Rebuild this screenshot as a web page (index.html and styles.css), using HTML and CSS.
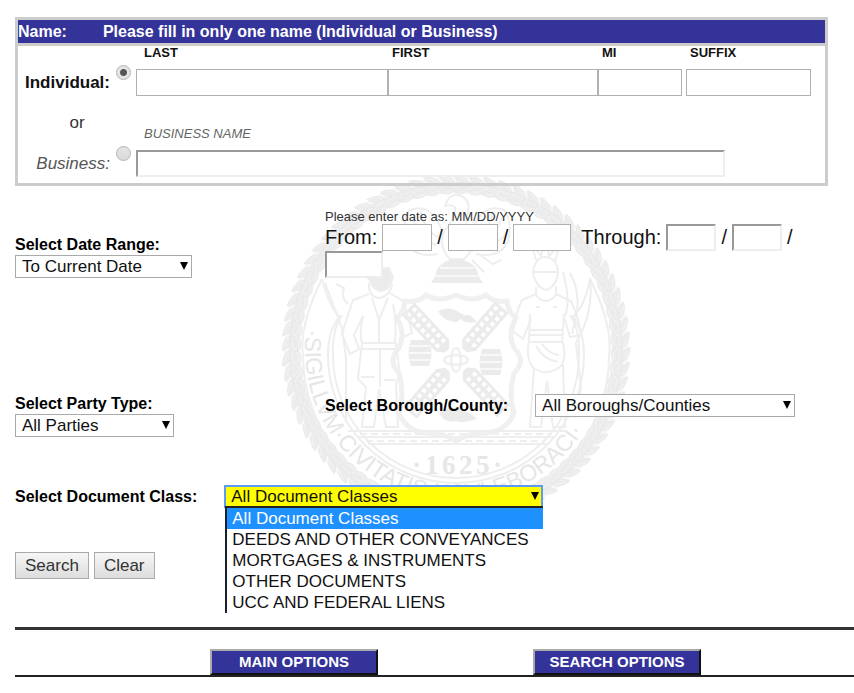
FILE: index.html
```html
<!DOCTYPE html>
<html lang="en">
<head>
  <meta charset="UTF-8">
  <meta name="viewport" content="width=device-width, initial-scale=1.0">
  <title>Search By Party Name</title>
  <link rel="stylesheet" href="styles.css">
</head>
<body>

  <!-- City seal watermark -->
  <svg class="seal" viewBox="0 0 350 350" aria-hidden="true">
    <defs>
      <g id="leaf">
        <path d="M172 0 q11 0 15 8 q-10 3 -15 -8z M171 8 q10 -3 17 3 q-9 7 -17 -3z M171 16 q9 -7 16 -3 q-5 10 -16 3z"/>
        <path d="M174 2 l9 5 M173 9 h11 M173 16 l10 -2"/>
      </g>
      <g id="leaf2"><use href="#leaf"/><use href="#leaf" transform="rotate(5 174 174)"/></g>
      <g id="leaf4"><use href="#leaf2"/><use href="#leaf2" transform="rotate(10 174 174)"/></g>
      <g id="leaf12"><use href="#leaf4"/><use href="#leaf4" transform="rotate(20 174 174)"/><use href="#leaf4" transform="rotate(40 174 174)"/></g>
      <g id="sail">
        <path class="fill" d="M-9 -70 h18 v50 l-6 7 h-6 l-6 -7z"/>
        <path class="holes" d="M-4 -67 v46 M4 -67 v46"/>
      </g>
      <g id="barrel">
        <path class="fill" d="M-9 -13 h18 q5 13 0 26 h-18 q-5 -13 0 -26z"/>
        <path class="gap" d="M-11 -7 h22 M-12 0 h24 M-11 7 h22"/>
      </g>
      <path id="motto" d="M25 150 A151 151 0 1 0 323 150"/>
    </defs>

    <circle class="wreath-base" cx="174" cy="174" r="164"/>
    <g class="wreath">
      <use href="#leaf12"/>
      <use href="#leaf12" transform="rotate(60 174 174)"/>
      <use href="#leaf12" transform="rotate(120 174 174)"/>
      <use href="#leaf12" transform="rotate(180 174 174)"/>
      <use href="#leaf12" transform="rotate(240 174 174)"/>
      <use href="#leaf12" transform="rotate(300 174 174)"/>
    </g>

    <!-- ribbon -->
    <g class="line">
      <path d="M40 104 Q17 150 21 181 A153 153 0 0 0 327 181 Q331 150 308 104"/>
      <path d="M40 104 Q48 134 58 142 Q46 154 46 180 A128 128 0 0 0 302 180 Q302 154 290 142 Q302 134 308 104"/>
      <path d="M60 140 Q50 154 51 180 A123 123 0 0 0 297 180 Q298 154 288 140"/>
    </g>
    <text class="motto"><textPath href="#motto" startOffset="4">·SIGILLVM·CIVITATIS·NOVI·EBORACI·</textPath></text>
    <text class="year" x="130 143 160 177 194 211" y="299">·1625·</text>

    <!-- eagle on the half globe -->
    <path class="fill" d="M149 108 l4 -6 q3 -17 21 -18 q20 1 23 18 l4 6z"/>
    <path class="gap" d="M154 101 h42 M158 93 h34"/>
    <g class="line">
      <path d="M163 31 q4 -14 16 -10 q11 5 6 19 q-3 12 6 18 q3 16 -9 26 h-14 q-12 -12 -6 -28 q12 -12 11 -24 q-5 -3 -10 -1z"/>
      <path d="M160 56 Q150 27 128 35 Q119 46 124 66 Q132 84 156 79 M130 42 q7 20 24 28 M139 36 q2 18 18 27 M124 56 q10 14 26 18"/>
      <path d="M190 56 Q200 27 222 35 Q231 46 226 66 Q218 84 194 79 M220 42 q-7 20 -24 28 M211 36 q-2 18 -18 27 M226 56 q-10 14 -26 18"/>
      <path d="M190 85 l12 12 M198 80 l13 9 l8 -4"/>
    </g>

    <!-- shield -->
    <path class="band" d="M115 143 q7 -6 8 -17 q14 2 21 -6 q13 8 30 0 q17 8 30 0 q8 8 21 6 q1 11 9 17 q-9 15 -2 30 q13 13 0 25 q-6 22 0 40 q-7 18 -28 20 q-18 0 -30 8 q-12 -8 -30 -8 q-20 -2 -27 -20 q6 -18 0 -40 q-12 -12 0 -25 q7 -15 -2 -30z"/>
    <use href="#sail" transform="translate(174 185) rotate(-43)"/>
    <use href="#sail" transform="translate(174 185) rotate(41)"/>
    <use href="#sail" transform="translate(174 185) rotate(137)"/>
    <use href="#sail" transform="translate(174 185) rotate(221)"/>
    <g class="line">
      <circle cx="174" cy="185" r="5"/>
      <ellipse cx="174" cy="185" rx="12" ry="5"/>
      <ellipse cx="174" cy="185" rx="5" ry="12"/>
    </g>
    <use href="#barrel" transform="translate(138 178)"/>
    <use href="#barrel" transform="translate(209 187)"/>
    <path class="fill" d="M156 136 q10 -5 19 0 q6 5 13 4 l7 7 q-12 2 -16 -3 q-5 5 -10 2 q-8 -1 -13 -10z"/>
    <path class="fill" d="M157 238 q12 -10 26 -2 q6 2 12 8 q-16 5 -21 2 q-11 3 -17 -8z"/>

    <!-- sailor -->
    <g class="line">
      <path class="fill" d="M83 101 l8 -8 h16 l4 9 q-3 13 -12 14 q-9 -1 -12 -12z"/>
      <path d="M87 108 q-1 13 9 15 q12 -1 14 -14 M87 119 l-16 6 q-6 17 -11 34 l8 20 l9 -5 l-5 -14 l9 -19 M108 118 l13 8 q6 17 9 32 l-13 6"/>
      <path d="M81 141 q-4 18 -1 27 h33 q2 -20 -2 -39 M90 123 l7 22 l9 -22 M97 145 v22 M80 168 l-4 36 l8 8 l-4 40 h12 l5 -38 l7 38 h12 l-2 -43 l4 -8 l-4 -33 M80 174 h33 M98 174 v38 M79 202 h14 M102 205 h12"/>
      <path d="M43 108 l17 45 l4 30 v64 M66 129 q-8 -7 -4 -16 l-8 -4"/>
    </g>

    <!-- native american -->
    <g class="line">
      <path d="M251 98 q2 -16 12 -16 q13 1 13 17 q-3 14 -12 16 q-10 -2 -13 -17z M252 97 h23 M254 85 l-5 -18 l10 14 l5 -20 l3 20 l11 -12 l-5 18"/>
      <path d="M254 112 v8 q9 12 20 0 v-9 M254 119 l-14 6 q-7 15 -9 31 l10 8 l8 -20 M274 119 l15 7 q8 17 10 34 l-11 2 l-6 -20"/>
      <path d="M248 139 l-1 28 h33 l2 -28 M254 132 h4 M271 132 h4 M248 155 h32 M248 160 h32 M247 166 q-4 20 6 28 q14 8 27 -4 q5 -12 0 -24 M252 193 l-4 59 h11 l6 -46 l6 46 h12 l-2 -62 M254 171 q8 14 22 16 M260 169 q7 10 17 11"/>
      <path d="M288 98 q10 17 7 39 l-5 22 M308 103 q4 34 -14 65 l5 45 l-6 30 M281 97 q8 30 2 44"/>
    </g>

    <!-- ground -->
    <g class="line">
      <path d="M66 256 H284 M75 262 H274 M86 269 h178"/>
      <path stroke-dasharray="7 4" d="M78 259 H270 M84 266 H264"/>
    </g>
  </svg>

  <form class="page" onsubmit="return false">

    <section class="name-box">
      <h2 class="name-title"><span>Name:</span><span>Please fill in only one name (Individual or Business)</span></h2>

      <div class="name-row">
        <label class="kind" for="individual">Individual:</label>
        <input class="radio" type="radio" id="individual" name="kind" checked>
        <div class="fields">
          <div class="field last">
            <label for="last">LAST</label>
            <input type="text" id="last">
          </div>
          <div class="field first">
            <label for="first">FIRST</label>
            <input type="text" id="first">
          </div>
          <div class="field mi">
            <label for="mi">MI</label>
            <input type="text" id="mi">
          </div>
          <div class="field suffix">
            <label for="suffix">SUFFIX</label>
            <input type="text" id="suffix">
          </div>
        </div>
      </div>

      <div class="name-row business">
        <div class="or">or</div>
        <label class="kind" for="business">Business:</label>
        <input class="radio" type="radio" id="business" name="kind">
        <div class="field business-field">
          <label for="business_name">BUSINESS NAME</label>
          <input class="inset" type="text" id="business_name">
        </div>
      </div>
    </section>

    <section class="row dates">
      <div class="stack">
        <label for="range">Select Date Range:</label>
        <span class="select range"><select id="range"><option>To Current Date</option></select></span>
      </div>
      <div class="date-entry">
        <div class="hint">Please enter date as: MM/DD/YYYY</div>
        <div class="date-line">
          <span>From:</span>
          <input type="text" aria-label="From month">
          <span>/</span>
          <input type="text" aria-label="From day">
          <span>/</span>
          <input class="year-input" type="text" aria-label="From year">
          <span class="through">Through:</span>
          <input class="inset" type="text" aria-label="Through month">
          <span>/</span>
          <input class="inset" type="text" aria-label="Through day">
          <span>/</span>
          <input class="inset year-input" type="text" aria-label="Through year">
        </div>
      </div>
    </section>

    <section class="row party">
      <div class="stack">
        <label for="party">Select Party Type:</label>
        <span class="select party-type"><select id="party"><option>All Parties</option></select></span>
      </div>
      <div class="inline">
        <label for="borough">Select Borough/County:</label>
        <span class="select borough"><select id="borough"><option>All Boroughs/Counties</option></select></span>
      </div>
    </section>

    <section class="doc-class">
      <label for="doc">Select Document Class:</label>
      <div class="select doc">
        <select id="doc"><option>All Document Classes</option></select>
        <ul class="menu" role="listbox" aria-label="Document classes">
          <li class="active" role="option" aria-selected="true">All Document Classes</li>
          <li role="option">DEEDS AND OTHER CONVEYANCES</li>
          <li role="option">MORTGAGES &amp; INSTRUMENTS</li>
          <li role="option">OTHER DOCUMENTS</li>
          <li role="option">UCC AND FEDERAL LIENS</li>
        </ul>
      </div>
    </section>

    <div class="buttons">
      <button type="submit" class="btn">Search</button>
      <button type="reset" class="btn">Clear</button>
    </div>

    <nav class="options">
      <button type="button" class="nav-btn">MAIN OPTIONS</button>
      <button type="button" class="nav-btn">SEARCH OPTIONS</button>
    </nav>
  </form>

</body>
</html>
```
FILE: styles.css
```css
* {
  box-sizing: border-box;
}

body {
  margin: 0;
  position: relative;
  background: #fff;
  color: #111;
  font-family: "Liberation Sans", Arial, sans-serif;
  font-size: 17px;
  line-height: 20px;
}

input,
select,
button {
  font: inherit;
  color: inherit;
  margin: 0;
}

.page {
  padding: 17px 0 16px 15px;
}

/* watermark */
.seal {
  position: absolute;
  left: 282px;
  top: 175px;
  width: 350px;
  z-index: -1;
  fill: none;
  stroke: none;
}

.seal .wreath-base {
  stroke: #f7f7f7;
  stroke-width: 17;
}

.seal .wreath {
  fill: #f0f0f0;
  stroke: #e9e9e9;
  stroke-width: 1;
}

.seal .line {
  stroke: #eeeeee;
  stroke-width: 2;
}

.seal .band {
  stroke: #f0f0f0;
  stroke-width: 5;
}

.seal .fill {
  fill: #ebebeb;
}

.seal .holes {
  stroke: #fff;
  stroke-width: 4;
  stroke-dasharray: 4 3;
}

.seal .gap {
  stroke: #f8f8f8;
  stroke-width: 2;
}

.seal text {
  fill: #e6e6e6;
  font-family: "Liberation Sans", Arial, sans-serif;
  font-size: 23px;
}

.seal .year {
  font-family: "Liberation Serif", serif;
  font-size: 27px;
  font-weight: bold;
}

/* name panel */
.name-box {
  margin-right: 26px;
  border: 3px solid #ccc;
}

.name-title {
  display: flex;
  gap: 36px;
  margin: 0;
  background: #339;
  color: #fff;
  border-bottom: 3px solid #ccc;
  font-size: 16px;
  line-height: 23px;
}

.name-row {
  display: grid;
  grid-template-columns: 92px 26px 1fr;
  align-items: end;
}

.kind {
  grid-column: 1;
  text-align: right;
  font-weight: bold;
  line-height: 27px;
}

.radio {
  appearance: none;
  width: 15px;
  height: 15px;
  margin: 0 0 16px 6px;
  border: 1px solid #b4b4b4;
  border-radius: 50%;
  background: linear-gradient(#e4e4e4, #dadada);
}

.radio:checked {
  background: radial-gradient(circle, #555 0 3px, #e4e4e4 4px);
}

.fields {
  display: flex;
  padding-right: 14px;
}

.field {
  display: flex;
  flex-direction: column;
}

.field label {
  padding-left: 4px;
  font-size: 13px;
  font-weight: bold;
  line-height: 14px;
  margin-bottom: 9px;
}

.field.last label,
.field.business-field label {
  padding-left: 8px;
}

.last {
  flex: 252;
}

.first {
  flex: 210;
}

.mi {
  flex: 84;
}

.suffix {
  flex: 125;
  margin-left: 4px;
}

input[type="text"] {
  width: 100%;
  height: 27px;
  padding: 0 4px;
  border: 1px solid #b0b0b0;
  background: #fff;
}

input.inset[type="text"] {
  border: 2px solid;
  border-color: #999 #eee #eee #999;
}

.business {
  grid-template-rows: 27px 27px 27px;
  padding-bottom: 6px;
}

.or {
  grid-column: 1;
  grid-row: 1 / 3;
  align-self: center;
  padding-left: 26px;
  text-align: center;
  color: #333;
}

.business .kind {
  grid-row: 3;
  color: #555;
  font-weight: normal;
  font-style: italic;
}

.business .radio {
  grid-column: 2;
  grid-row: 1 / 4;
}

.business-field {
  grid-column: 3;
  grid-row: 1 / 4;
  margin-right: 100px;
}

.business-field label {
  color: #666;
  font-weight: normal;
  font-style: italic;
}

/* search criteria */
.row {
  display: grid;
  grid-template-columns: 310px 1fr;
  margin-right: 26px;
}

.stack {
  display: flex;
  flex-direction: column;
  align-items: flex-start;
}

.stack label,
.inline label,
.doc-class label {
  font-size: 16px;
  font-weight: bold;
  color: #000;
}

.select {
  position: relative;
  display: block;
}

.select select {
  appearance: none;
  display: block;
  width: 100%;
  height: 23px;
  padding: 0 6px;
  border: 1px solid #aaa;
  border-radius: 0;
  background: #fff;
  line-height: 20px;
}

/* drop-down arrow */
.select::after {
  content: "";
  position: absolute;
  right: 4px;
  top: 7px;
  border: 4px solid transparent;
  border-top: 8px solid #000;
  border-bottom: 0;
  pointer-events: none;
}

.dates {
  margin-top: 24px;
}

.dates .stack {
  padding-top: 25px;
}

.range {
  width: 177px;
}

.hint {
  font-size: 13px;
  line-height: 14px;
  color: #333;
}

.date-line {
  display: flex;
  flex-wrap: wrap;
  column-gap: 5px;
  font-size: 20px;
  line-height: 27px;
}

.date-line input[type="text"] {
  width: 50px;
}

.date-line input.year-input {
  width: 58px;
}

.through {
  margin-left: 5px;
}

.party {
  margin-top: 116px;
}

.party-type {
  width: 159px;
}

.inline {
  display: flex;
  align-items: center;
  align-self: start;
  gap: 27px;
}

.borough {
  flex: 0 1 260px;
}

.doc-class {
  display: flex;
  align-items: center;
  gap: 27px;
  margin-top: 48px;
}

.doc {
  width: 319px;
}

.doc select {
  background: #ff0;
  border: 2px solid #5b9bf5;
  padding: 0 5px;
}

.menu {
  position: absolute;
  left: 1px;
  right: 0;
  top: 21px;
  margin: 0;
  padding: 0;
  border-top: 2px solid #222;
  border-left: 2px solid #16202c;
  background: #fff;
  list-style: none;
  line-height: 21px;
}

.menu li {
  padding-left: 5px;
}

.menu .active {
  background: #1e90ff;
  color: #fff;
}

.buttons {
  display: flex;
  gap: 5px;
  margin-top: 44px;
}

.btn {
  height: 27px;
  padding: 0 9px;
  border: 1px solid #aaa;
  background: linear-gradient(#f6f6f6, #ddd);
  color: #333;
}

.options {
  display: flex;
  gap: 155px;
  margin-top: 48px;
  padding: 19px 0 0 195px;
  border-top: 3px solid #333;
  border-bottom: 2px solid #222;
}

.nav-btn {
  height: 26px;
  padding: 0 14px;
  min-width: 168px;
  border: 2px solid;
  border-color: #aaa #111 #111 #aaa;
  background: #339;
  color: #fff;
  font-size: 15px;
  font-weight: bold;
}
```
